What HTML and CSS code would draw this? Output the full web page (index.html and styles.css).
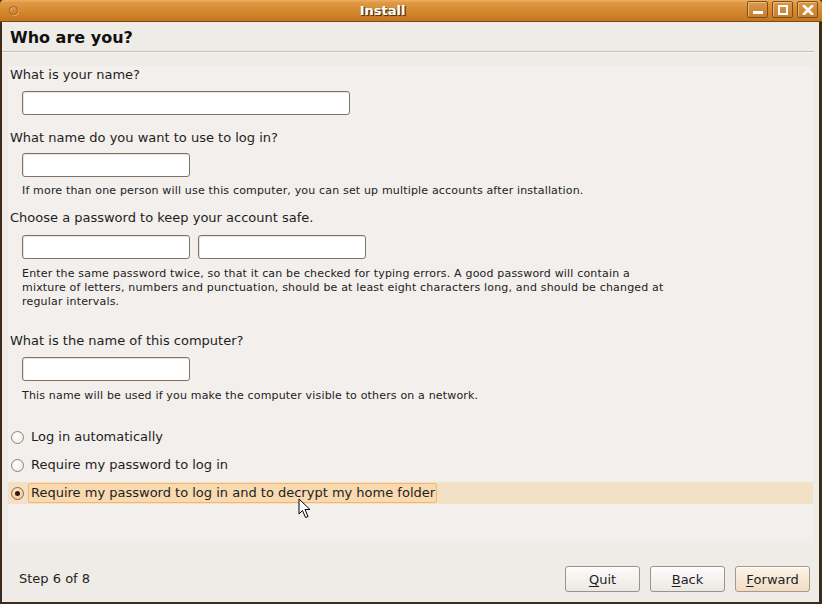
FILE: index.html
```html
<!DOCTYPE html>
<html>
<head>
<meta charset="utf-8">
<link rel="stylesheet" href="styles.css">
</head>
<body>
<div class="window">
  <div class="titlebar">
    <span class="menu-dot"></span>
    <span class="title">Install</span>
    <div class="wbtns">
      <span class="wbtn"><svg width="12" height="10" viewBox="0 0 12 10"><rect x="1" y="6" width="10" height="3" fill="#fff"/></svg></span>
      <span class="wbtn"><svg width="12" height="10" viewBox="0 0 12 10"><rect x="2" y="1" width="8" height="8" fill="none" stroke="#fff" stroke-width="2"/></svg></span>
      <span class="wbtn"><svg width="12" height="10" viewBox="0 0 12 10"><path d="M2 1 L10 9 M10 1 L2 9" stroke="#fff" stroke-width="2.6" stroke-linecap="square"/></svg></span>
    </div>
  </div>
  <div class="body">
    <h1 class="heading">Who are you?</h1>
    <div class="sep"></div>
    <div class="panel">
      <div class="label l1">What is your name?</div>
      <div class="input wide i1"></div>
      <div class="label l2">What name do you want to use to log in?</div>
      <div class="input i2"></div>
      <div class="hint h1">If more than one person will use this computer, you can set up multiple accounts after installation.</div>
      <div class="label l3">Choose a password to keep your account safe.</div>
      <div class="inputs i3"><div class="input"></div><div class="input"></div></div>
      <div class="hint para">Enter the same password twice, so that it can be checked for typing errors. A good password will contain a<br>mixture of letters, numbers and punctuation, should be at least eight characters long, and should be changed at<br>regular intervals.</div>
      <div class="label l4">What is the name of this computer?</div>
      <div class="input i4"></div>
      <div class="hint h2">This name will be used if you make the computer visible to others on a network.</div>
      <div class="radios">
        <div class="radio-row"><span class="radio"></span><span class="rlabel">Log in automatically</span></div>
        <div class="radio-row"><span class="radio"></span><span class="rlabel">Require my password to log in</span></div>
        <div class="radio-row active"><span class="radio on"></span><span class="rlabel focus">Require my password to log in and to decrypt my home folder</span></div>
      </div>
    </div>
    <div class="footer">
      <span class="step">Step 6 of 8</span>
      <div class="buttons">
        <span class="btn"><u>Q</u>uit</span>
        <span class="btn"><u>B</u>ack</span>
        <span class="btn default"><u>F</u>orward</span>
      </div>
    </div>
  </div>
  <svg class="cursor" width="14" height="22" viewBox="0 0 14 22"><path d="M1 1 L1 16 L4.5 12.5 L7.5 19.5 L10 18.5 L7 11.5 L12 11.5 Z" fill="#fff" stroke="#000" stroke-width="1" stroke-linejoin="miter"/></svg>
</div>
</body>
</html>
```
FILE: styles.css
```css
html, body {
  margin: 0;
  padding: 0;
  width: 822px;
  height: 604px;
  overflow: hidden;
  background: #3c2a1b;
}
.window {
  position: relative;
  width: 822px;
  height: 604px;
  box-sizing: border-box;
  border-left: 2px solid #3d2b1c;
  border-right: 3px solid #3d2b1c;
  border-bottom: 2px solid #3d2b1c;
  border-radius: 4px 4px 0 0;
  background: #efebe7;
  font-family: "DejaVu Sans", "Liberation Sans", sans-serif;
  color: #1a1a1a;
  display: flex;
  flex-direction: column;
}
.titlebar {
  height: 22px;
  margin: 0 -3px 0 -2px;
  box-sizing: border-box;
  border-bottom: 1px solid #7a4a16;
  border-radius: 4px 4px 0 0;
  background: linear-gradient(to bottom, #eeb064 0%, #e09a45 12%, #d78b31 45%, #cc7e25 80%, #c47620 100%);
  display: flex;
  align-items: center;
  padding: 0 4px 0 9px;
}
.menu-dot {
  width: 9px;
  height: 9px;
  box-sizing: border-box;
  border-radius: 50%;
  border: 1px solid #9c6224;
  box-shadow: inset 1px 1px 0 rgba(255,255,255,0.35), 1px 1px 0 rgba(255,220,170,0.4);
  margin-top: -1px;
}
.title {
  flex: 1;
  text-align: center;
  color: #fff;
  font-weight: bold;
  font-size: 13px;
  text-shadow: 1px 1px 0 #5a3a10, 1px 1px 1px #3a2508;
  margin-top: -1px;
}
.wbtns {
  display: flex;
  gap: 4px;
  margin-top: -2px;
}
.wbtn {
  width: 21px;
  height: 17px;
  box-sizing: border-box;
  border: 1px solid #7e4e1a;
  border-radius: 2px;
  box-shadow: inset 1px 1px 0 rgba(255,220,160,0.55);
  background: linear-gradient(to bottom, #d9984a, #c7802e);
  display: flex;
  align-items: center;
  justify-content: center;
}
.body {
  flex: 1;
  display: flex;
  flex-direction: column;
}
.heading {
  margin: 6px 0 0 8px;
  font-size: 16px;
  line-height: 20px;
  font-weight: bold;
  color: #111;
}
.sep {
  margin: 3px 5px 0 0;
  height: 1px;
  background: #c9c0b6;
  border-bottom: 1px solid #f7f5f3;
}
.panel {
  margin: 13px 6px 0 6px;
  height: 477px;
  box-sizing: border-box;
  background: #f2efec;
  padding: 1px 0 0 2px;
  display: flex;
  flex-direction: column;
}
.label {
  font-size: 13px;
  line-height: 16px;
  color: #1e1e1e;
}
.l2 { margin-top: 15px; }
.l3 { margin-top: 12px; }
.l4 { margin-top: 24px; }
.input {
  width: 168px;
  height: 24px;
  box-sizing: border-box;
  background: #fff;
  border: 1px solid #7f7367;
  border-radius: 3px;
  box-shadow: inset 1px 1px 0 #e8e4e0;
}
.input.wide { width: 328px; }
.i1, .i2, .i4, .inputs { margin-left: 12px; }
.i1 { margin-top: 8px; }
.i2 { margin-top: 7px; }
.i4 { margin-top: 8px; }
.inputs {
  display: flex;
  gap: 8px;
  margin-top: 9px;
}
.hint {
  font-size: 11px;
  line-height: 14px;
  margin-left: 12px;
  color: #222;
  letter-spacing: 0.17px;
}
.h1 { margin-top: 7px; }
.h2 { margin-top: 8px; }
.para {
  margin-top: 8px;
  letter-spacing: 0.18px;
}
.radios {
  margin-top: 23px;
  margin-left: -2px;
  display: flex;
  flex-direction: column;
  gap: 6px;
}
.radio-row {
  height: 22px;
  display: flex;
  align-items: center;
  padding-left: 3px;
}
.radio-row.active {
  background: #f2e0c7;
}
.radio {
  width: 13px;
  height: 13px;
  box-sizing: border-box;
  border-radius: 50%;
  border: 1px solid #8d837a;
  background: radial-gradient(circle at 40% 35%, #ffffff, #ebe7e3);
  display: flex;
  align-items: center;
  justify-content: center;
}
.radio.on {
  border-color: #94663a;
  background: radial-gradient(circle at 40% 35%, #fde8cc, #f0c48c);
}
.radio.on::after {
  content: "";
  width: 5px;
  height: 5px;
  border-radius: 50%;
  background: #2a1c10;
}
.rlabel {
  font-size: 13px;
  line-height: 16px;
  margin-left: 4px;
  padding: 1px 1px 1px 2px;
  border: 1px solid transparent;
  border-radius: 2px;
  color: #1e1e1e;
}
.rlabel.focus {
  background: #f8d9b0;
  border-color: #f4b86c;
}
.footer {
  flex: 1;
  display: flex;
  align-items: flex-start;
  justify-content: space-between;
  padding: 23px 9px 0 17px;
}
.step {
  font-size: 13px;
  line-height: 26px;
  color: #1e1e1e;
}
.buttons {
  display: flex;
  gap: 10px;
}
.btn {
  width: 75px;
  height: 26px;
  box-sizing: border-box;
  border: 1px solid #9b9288;
  border-radius: 3px;
  background: linear-gradient(to bottom, #fdfcfb, #ece8e4);
  box-shadow: inset 0 1px 0 #fff;
  font-size: 13px;
  display: flex;
  align-items: center;
  justify-content: center;
  color: #1e1e1e;
}
.btn u { text-decoration: underline; text-underline-offset: 2px; }
.btn.default {
  background: linear-gradient(to bottom, #fcf4ea, #f0dcc3);
  border-color: #a89886;
}
.cursor {
  position: absolute;
  left: 296px;
  top: 498px;
}
```
